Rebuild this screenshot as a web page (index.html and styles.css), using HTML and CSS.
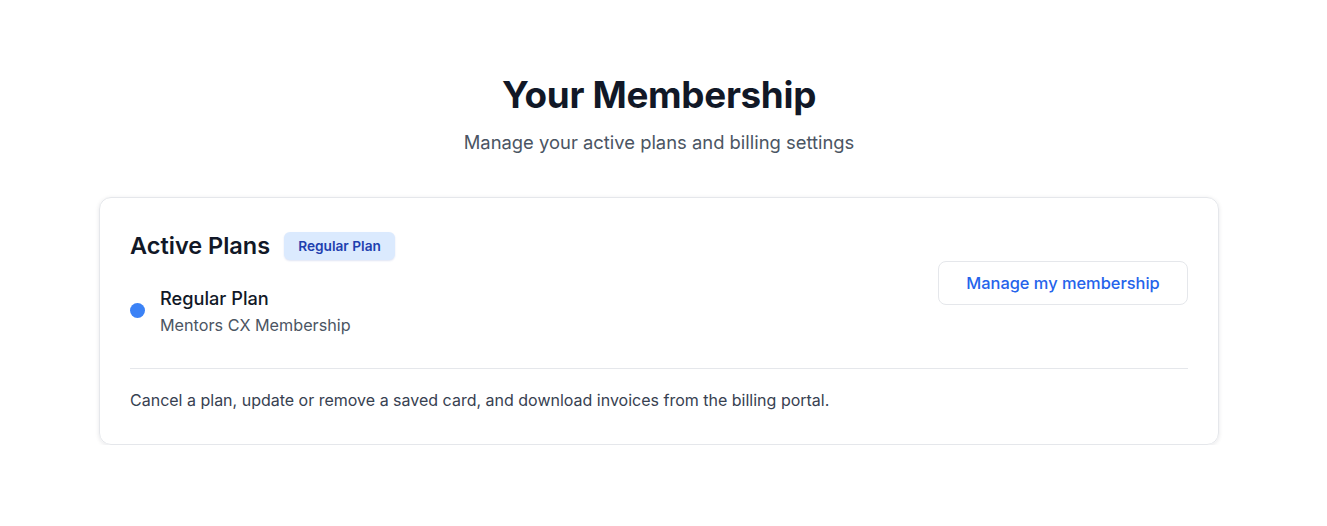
FILE: index.html
```html
<!DOCTYPE html>
<html lang="en">
<head>
<meta charset="utf-8">
<title>Your Membership</title>
<link rel="stylesheet" href="styles.css">
</head>
<body>
<main class="page">
  <header class="intro">
    <h1 class="title">Your Membership</h1>
    <p class="subtitle">Manage your active plans and billing settings</p>
  </header>
  <section class="card">
    <div class="card-top">
      <div class="plans">
        <div class="plans-head">
          <h2 class="plans-title">Active Plans</h2>
          <span class="badge">Regular Plan</span>
        </div>
        <div class="plan">
          <span class="dot"></span>
          <div class="plan-text">
            <div class="plan-name">Regular Plan</div>
            <div class="plan-desc">Mentors CX Membership</div>
          </div>
        </div>
      </div>
      <button class="manage-btn" type="button">Manage my membership</button>
    </div>
    <div class="divider"></div>
    <p class="note">Cancel a plan, update or remove a saved card, and download invoices from the billing portal.</p>
  </section>
</main>
</body>
</html>
```
FILE: styles.css
```css
* { box-sizing: border-box; }
html, body { margin: 0; padding: 0; background: #ffffff; }
body {
  font-family: "Inter", "Liberation Sans", sans-serif;
  color: #111827;
  padding-right: 9px;
}
.page {
  max-width: 1120px;
  margin: 0 auto;
  padding-top: 71px;
}
.intro { text-align: center; }
.title {
  margin: 0;
  font-size: 36.8px;
  font-weight: 700;
  line-height: 48px;
  letter-spacing: -0.3px;
  color: #111827;
}
.subtitle {
  margin: 11px 0 0;
  font-size: 18.4px;
  line-height: 24px;
  color: #4b5563;
}
.card {
  margin-top: 43px;
  border: 1px solid #e5e7eb;
  border-radius: 12px;
  box-shadow: 0 1px 4px rgba(17, 24, 39, 0.1);
  padding: 30px 30px 33px;
}
.card-top {
  display: flex;
  justify-content: space-between;
  align-items: center;
}
.plans-head {
  display: flex;
  align-items: center;
  gap: 14px;
}
.plans-title {
  margin: 0;
  font-size: 23.5px;
  font-weight: 600;
  line-height: 36px;
  color: #111827;
}
.badge {
  display: inline-block;
  background: #dbeafe;
  color: #1e40af;
  font-size: 13.7px;
  font-weight: 600;
  line-height: 20px;
  padding: 4px 14px;
  border-radius: 6px;
  box-shadow: 0 1px 2px rgba(30, 64, 175, 0.14);
}
.plan {
  display: flex;
  align-items: center;
  gap: 15px;
  margin-top: 22px;
}
.dot {
  width: 15px;
  height: 15px;
  border-radius: 50%;
  background: #3b82f6;
  flex: none;
  margin-top: -1px;
}
.plan-name {
  font-size: 18.2px;
  font-weight: 500;
  line-height: 24px;
  color: #111827;
}
.plan-desc {
  margin-top: 4px;
  font-size: 16.2px;
  line-height: 22px;
  color: #4b5563;
}
.manage-btn {
  font-family: inherit;
  font-size: 16.4px;
  font-weight: 500;
  color: #2563eb;
  background: #ffffff;
  border: 1px solid #e5e7eb;
  border-radius: 8px;
  height: 44px;
  width: 250px;
  cursor: pointer;
  margin-top: 2px;
}
.divider {
  height: 1px;
  background: #e5e7eb;
  margin-top: 32px;
}
.note {
  margin: 20px 0 0;
  font-size: 16px;
  line-height: 22px;
  color: #374151;
}
```
